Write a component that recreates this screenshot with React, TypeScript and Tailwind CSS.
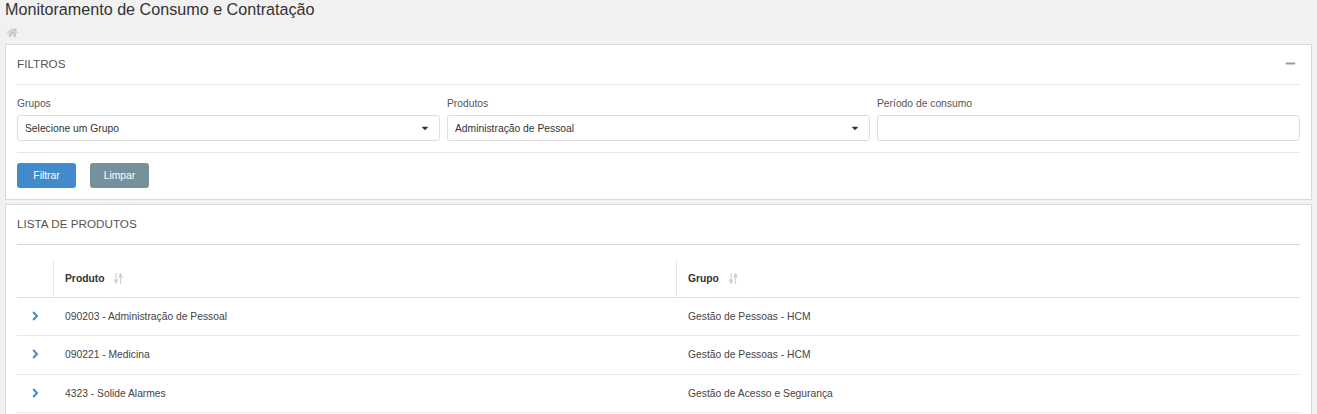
import { FaHome, FaMinus, FaCaretDown } from "react-icons/fa"

const rows = [
  { produto: "090203 - Administração de Pessoal", grupo: "Gestão de Pessoas - HCM", h: "h-[38px]" },
  { produto: "090221 - Medicina", grupo: "Gestão de Pessoas - HCM", h: "h-[39px]" },
  { produto: "4323 - Solide Alarmes", grupo: "Gestão de Acesso e Segurança", h: "h-[38px]" },
]

function SortIcon() {
  return (
    <svg width="9" height="11" viewBox="0 0 9 11" className="text-[#d4d0cc] ml-[10px]">
      <path d="M2 0v8M0.5 7L2 10.5 3.5 7zM6.5 11V3M5 4l1.5-3.5L8 4z" fill="currentColor" stroke="currentColor" strokeWidth="1.2" />
    </svg>
  )
}

function Chevron() {
  return (
    <svg width="7" height="10" viewBox="0 0 7 10" className="text-[#428bca] mb-[2px]">
      <path d="M1.2 1l3.8 4-3.8 4" fill="none" stroke="currentColor" strokeWidth="2" />
    </svg>
  )
}

function Field({ label, value, select }: { label: string; value?: string; select?: boolean }) {
  return (
    <div className="flex-1 min-w-0">
      <div className="text-[10.3px] leading-[14px] text-[#555] mb-[4px]">{label}</div>
      <div className="h-[26px] border border-[#dedede] rounded-[3px] flex items-center justify-between pl-[7px] pr-[9px] text-[10.3px] text-[#333]">
        <span className="pt-[1px]">{value}</span>
        {select && <FaCaretDown size={10} className="text-[#333]" />}
      </div>
    </div>
  )
}

export default function App() {
  return (
    <div className="bg-[#f1f1f1] h-[414px] overflow-hidden font-['Liberation_Sans',Arial,sans-serif] px-[5px]">
      <h1 className="text-[16.15px] leading-[18px] text-[#333] h-[25px]">Monitoramento de Consumo e Contratação</h1>
      <div className="h-[19px] flex items-start pl-[2px] pt-[2px]">
        <FaHome size={11} className="text-[#c8c8c8]" />
      </div>

      <section className="bg-white border border-[#d9d9d9] h-[156px] px-[11px]">
        <div className="h-[40px] border-b border-[#e6e6e6] flex items-center justify-between pb-[2px]">
          <h2 className="text-[11.7px] text-[#555]">FILTROS</h2>
          <FaMinus size={11} className="text-[#999] mr-[4px]" />
        </div>
        <div className="flex gap-[7px] pt-[12px] pb-[11px] border-b border-[#e6e6e6]">
          <Field label="Grupos" value="Selecione um Grupo" select />
          <Field label="Produtos" value="Administração de Pessoal" select />
          <Field label="Período de consumo" />
        </div>
        <div className="flex gap-[14px] pt-[10px]">
          <button className="w-[59px] h-[25px] rounded-[3px] bg-[#428bca] text-white text-[10.3px]">Filtrar</button>
          <button className="w-[59px] h-[25px] rounded-[3px] bg-[#78909c] text-white text-[10.3px]">Limpar</button>
        </div>
      </section>

      <section className="bg-white border border-[#d9d9d9] mt-[4px] px-[11px] h-[300px]">
        <div className="h-[40px] border-b border-[#d9d9d9] flex items-center pb-[2px]">
          <h2 className="text-[11.7px] text-[#555]">LISTA DE PRODUTOS</h2>
        </div>
        <div className="pt-[15px]">
          <div className="flex h-[38px] border-b border-[#e0e0e0] text-[10.3px] font-bold text-[#333]">
            <div className="w-[37px] border-r border-[#e8e8e8]" />
            <div className="w-[623px] border-r border-[#e8e8e8] flex items-center pl-[11px]">Produto<SortIcon /></div>
            <div className="flex-1 flex items-center pl-[11px]">Grupo<SortIcon /></div>
          </div>
          {rows.map((r) => (
            <div key={r.produto} className={`flex ${r.h} border-b border-[#e8e8e8] text-[10.3px] text-[#444]`}>
              <div className="w-[37px] flex items-center pl-[15px]">
                <Chevron />
              </div>
              <div className="w-[623px] flex items-center pl-[11px]">{r.produto}</div>
              <div className="flex-1 flex items-center pl-[11px]">{r.grupo}</div>
            </div>
          ))}
        </div>
      </section>
    </div>
  )
}
